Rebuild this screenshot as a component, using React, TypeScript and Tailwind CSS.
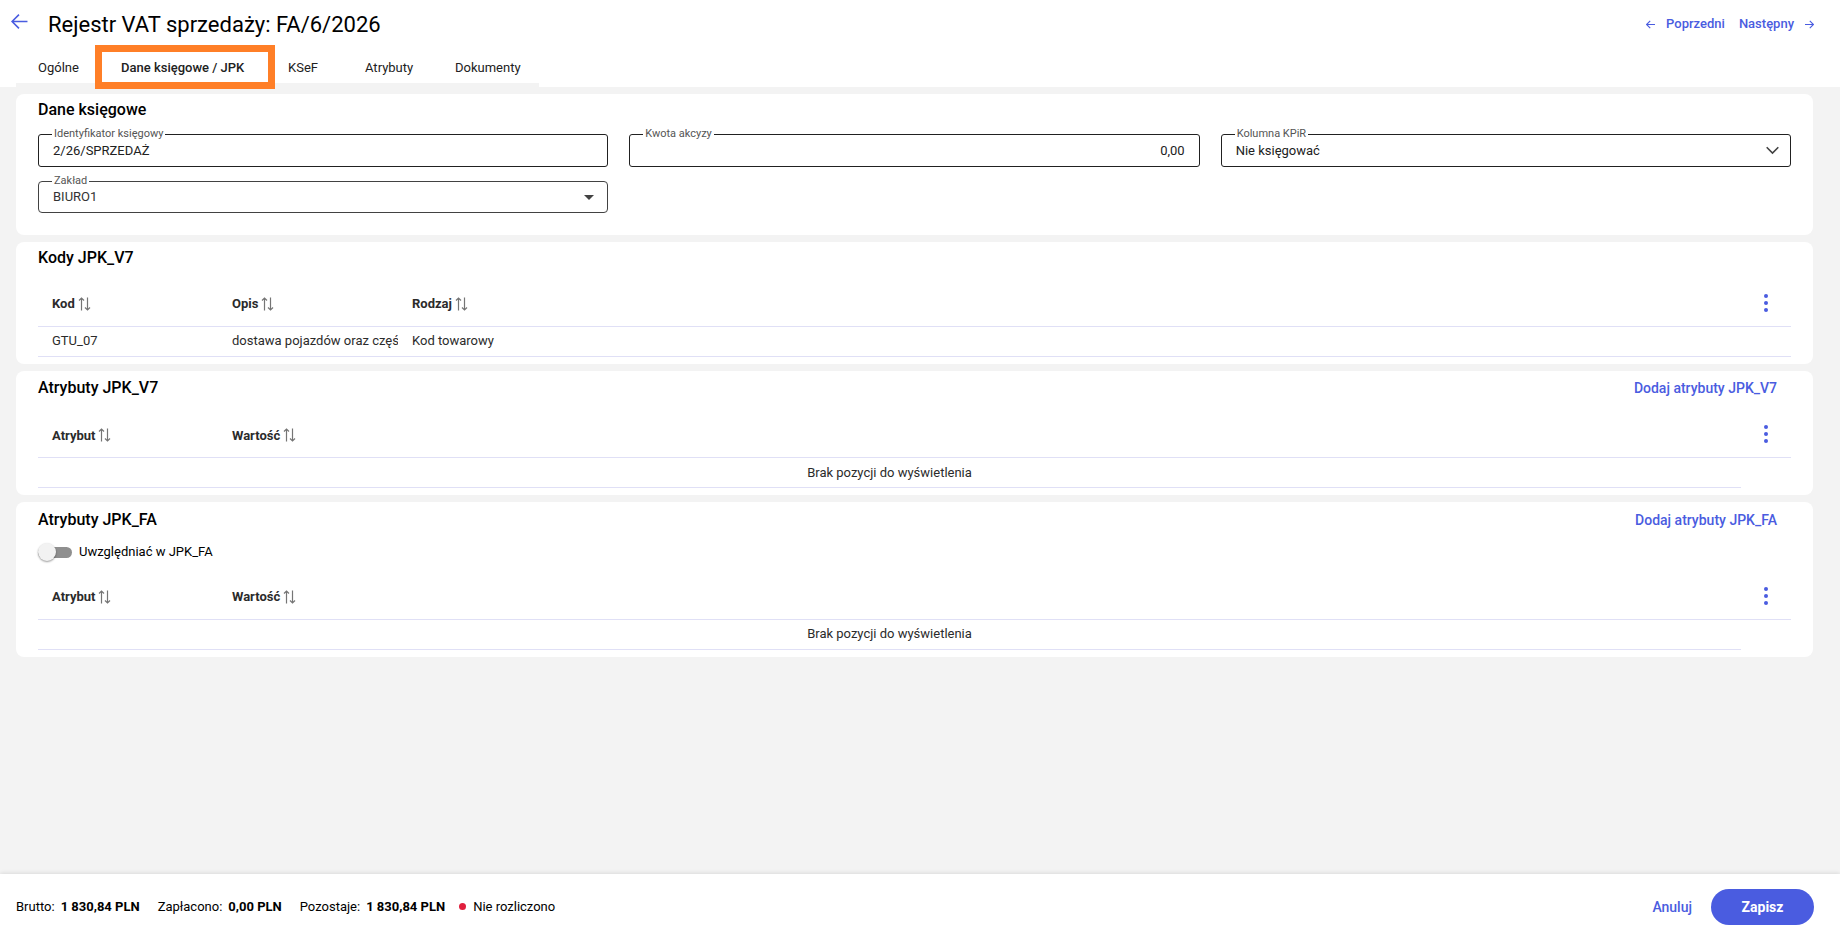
import type { ReactNode } from "react";

type TabItem = { label: string; className: string; active?: boolean };

const tabs: TabItem[] = [
  { label: "Ogólne", className: "w-[83px]" },
  { label: "Dane księgowe / JPK", className: "w-[167px]", active: true },
  { label: "KSeF", className: "w-[77px]" },
  { label: "Atrybuty", className: "w-[90px]" },
  { label: "Dokumenty", className: "w-[106px]" },
];

const totals = [
  { label: "Brutto:", value: "1 830,84 PLN" },
  { label: "Zapłacono:", value: "0,00 PLN" },
  { label: "Pozostaje:", value: "1 830,84 PLN" },
];

function ArrowIcon({ className, d }: { className: string; d: string }) {
  return (
    <svg viewBox="0 0 16 16" className={className} fill="none" stroke="currentColor" aria-hidden>
      <path d={d} />
    </svg>
  );
}

function SortIcon() {
  return (
    <svg width="13" height="14" viewBox="0 0 13 14" fill="none" stroke="#757575" strokeWidth="1.2" aria-hidden>
      <path d="M3.5 13.5V1M1 3.5 3.5 1 6 3.5M9.5 .5V13M7 10.5 9.5 13 12 10.5" />
    </svg>
  );
}

function MoreButton() {
  return (
    <button type="button" aria-label="Więcej" className="flex h-8 w-[50px] items-center justify-center text-[#4a5ce0]">
      <svg width="4" height="18" viewBox="0 0 4 18" fill="currentColor" aria-hidden>
        <circle cx="2" cy="2" r="2" />
        <circle cx="2" cy="9" r="2" />
        <circle cx="2" cy="16" r="2" />
      </svg>
    </button>
  );
}

function Card({ title, action, children }: { title: string; action?: string; children: ReactNode }) {
  return (
    <section className="rounded-lg bg-white px-[22px] pb-[7px]">
      <div className={`flex items-center justify-between ${action ? "h-[35px]" : "h-8"}`}>
        <h2 className="text-base font-medium text-black">{title}</h2>
        {action && (
          <button type="button" className="mr-[14px] text-sm font-medium text-[#4a5ce0]">
            {action}
          </button>
        )}
      </div>
      {children}
    </section>
  );
}

function Field({ id, label, children }: { id: string; label: string; children: ReactNode }) {
  return (
    <div className="relative">
      <label htmlFor={id} className="absolute -top-2 left-[14px] bg-white px-0.5 text-[11px] leading-4 text-[#555]">
        {label}
      </label>
      {children}
    </div>
  );
}

function DataTable({ columns, rows }: { columns: string[]; rows: string[][] }) {
  return (
    <table className="w-full table-fixed border-collapse text-left text-[13px] text-[#2b2b2b]">
      <colgroup>
        {columns.map((column) => (
          <col key={column} className="w-[180px]" />
        ))}
        <col />
        <col className="w-[50px]" />
      </colgroup>
      <thead>
        <tr className="h-[52px] border-b border-[#e0e0f6]">
          {columns.map((column) => (
            <th key={column} className="pt-2 pb-0 pl-[14px] font-bold">
              <button type="button" className="flex items-center gap-[3px]">
                {column}
                <SortIcon />
              </button>
            </th>
          ))}
          <th />
          <th className="px-0 pt-1.5 pb-0">
            <MoreButton />
          </th>
        </tr>
      </thead>
      <tbody>
        {rows.map((row) => (
          <tr key={row[0]} className="h-[30px] border-b border-[#e0e0f6]">
            {row.map((cell) => (
              <td key={cell} className="py-0 pr-0 pl-[14px]">
                <div className="overflow-hidden whitespace-nowrap">{cell}</div>
              </td>
            ))}
            <td colSpan={2} />
          </tr>
        ))}
        {rows.length === 0 && (
          <tr className="h-[30px]">
            <td colSpan={columns.length + 1} className="border-b border-[#e0e0f6] p-0 text-center">
              Brak pozycji do wyświetlenia
            </td>
          </tr>
        )}
      </tbody>
    </table>
  );
}

export default function App() {
  return (
    <div className="flex min-h-screen flex-col bg-[#f3f3f3] font-[Roboto,sans-serif] text-[13px] text-black">
      <header className="bg-white">
        <div className="flex h-12 items-center pr-[26px] pl-[11px]">
          <a href="#lista" aria-label="Wróć" className="mr-5 mb-1.5 text-[#4a5ce0]">
            <ArrowIcon className="size-[17px] stroke-[1.5]" d="M15.5 8H1M7.5 1.5 1 8l6.5 6.5" />
          </a>
          <h1 className="text-[22px]">Rejestr VAT sprzedaży: FA/6/2026</h1>
          <nav className="ml-auto flex gap-[14px] font-medium text-[#4a5ce0]">
            <a href="#poprzedni" className="flex items-center gap-[11px]">
              <ArrowIcon className="size-[9px] stroke-2" d="M16 8H1M7.5 1.5 1 8l6.5 6.5" />
              Poprzedni
            </a>
            <a href="#nastepny" className="flex items-center gap-[11px]">
              Następny
              <ArrowIcon className="size-[9px] stroke-2" d="M0 8H15M8.5 1.5 15 8l-6.5 6.5" />
            </a>
          </nav>
        </div>
        <div className="flex h-[39px] items-end pl-4">
          <div role="tablist" className="flex border-b-4 border-[#f3f3f3]">
            {tabs.map((tab) => (
              <div key={tab.label} className={`relative ${tab.className}`}>
                <button
                  type="button"
                  role="tab"
                  aria-selected={!!tab.active}
                  className={`h-[35px] w-full pt-1 pl-[22px] text-left whitespace-nowrap text-[#212121] ${tab.active ? "font-medium" : ""}`}
                >
                  {tab.label}
                </button>
                {tab.active && (
                  <div className="pointer-events-none absolute -top-[3px] -left-1 h-[44px] w-[180px] border-[7px] border-[#ff7f27]" />
                )}
              </div>
            ))}
          </div>
        </div>
      </header>

      <main className="flex flex-1 flex-col gap-[7px] pt-[7px] pr-[27px] pb-6 pl-4">
        <Card title="Dane księgowe">
          <div className="grid grid-cols-3 gap-x-[21px] gap-y-[14px] pt-2 pb-[15px]">
            <Field id="identyfikator" label="Identyfikator księgowy">
              <input
                id="identyfikator"
                defaultValue="2/26/SPRZEDAŻ"
                className="h-[33px] w-full rounded-[3px] border border-[#212121] px-[14px] text-[#212121]"
              />
            </Field>
            <Field id="akcyza" label="Kwota akcyzy">
              <input
                id="akcyza"
                defaultValue="0,00"
                className="h-[33px] w-full rounded-[3px] border border-[#212121] px-[14px] text-right text-[#212121]"
              />
            </Field>
            <Field id="kpir" label="Kolumna KPiR">
              <select
                id="kpir"
                className="h-[33px] w-full appearance-none rounded-[3px] border border-[#212121] px-[14px] text-[#212121]"
              >
                <option>Nie księgować</option>
              </select>
              <svg
                className="pointer-events-none absolute top-3 right-3"
                width="13"
                height="9"
                viewBox="0 0 13 9"
                fill="none"
                stroke="#424242"
                strokeWidth="1.6"
                aria-hidden
              >
                <path d="M.7 1.2 6.5 7l5.8-5.8" />
              </svg>
            </Field>
            <Field id="zaklad" label="Zakład">
              <select
                id="zaklad"
                className="h-8 w-full appearance-none rounded border border-[#424242] px-[14px] text-[#333]"
              >
                <option>BIURO1</option>
              </select>
              <svg
                className="pointer-events-none absolute top-[14px] right-[14px]"
                width="10"
                height="5"
                viewBox="0 0 10 5"
                fill="#424242"
                aria-hidden
              >
                <path d="M0 0h10L5 5z" />
              </svg>
            </Field>
          </div>
        </Card>

        <Card title="Kody JPK_V7">
          <DataTable
            columns={["Kod", "Opis", "Rodzaj"]}
            rows={[["GTU_07", "dostawa pojazdów oraz części", "Kod towarowy"]]}
          />
        </Card>

        <Card title="Atrybuty JPK_V7" action="Dodaj atrybuty JPK_V7">
          <DataTable columns={["Atrybut", "Wartość"]} rows={[]} />
        </Card>

        <Card title="Atrybuty JPK_FA" action="Dodaj atrybuty JPK_FA">
          <label className="flex h-[30px] items-center gap-[7px]">
            <input
              type="checkbox"
              role="switch"
              className="relative h-[11px] w-[34px] appearance-none rounded-full bg-[#8f8f8f] before:absolute before:-top-1 before:left-0 before:size-[18px] before:rounded-full before:bg-[#f2f2f2] before:shadow-[0_1px_2px_rgba(0,0,0,0.4)]"
            />
            Uwzględniać w JPK_FA
          </label>
          <DataTable columns={["Atrybut", "Wartość"]} rows={[]} />
        </Card>
      </main>

      <footer className="flex h-[62px] items-center justify-between bg-white pt-[3px] pr-[26px] pl-4 shadow-[0_-1px_4px_rgba(0,0,0,0.1)]">
        <div className="flex items-center">
          <dl className="flex gap-[18px]">
            {totals.map((total) => (
              <div key={total.label} className="flex gap-1.5">
                <dt>{total.label}</dt>
                <dd className="font-bold">{total.value}</dd>
              </div>
            ))}
          </dl>
          <span className="ml-[14px] size-[7px] rounded-full bg-[#e01f3d]" />
          <span className="ml-[7px]">Nie rozliczono</span>
        </div>
        <div className="flex items-center gap-[19px] text-sm font-medium">
          <button type="button" className="text-[#4a5ce0]">
            Anuluj
          </button>
          <button type="button" className="h-9 w-[103px] rounded-full bg-[#4a5ce0] font-bold text-white">
            Zapisz
          </button>
        </div>
      </footer>
    </div>
  );
}
